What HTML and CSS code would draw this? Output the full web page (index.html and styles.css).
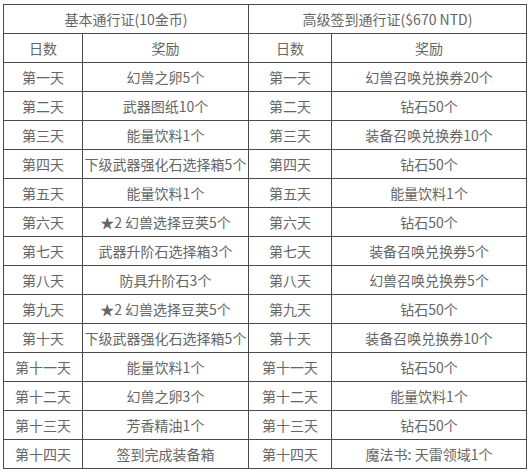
FILE: index.html
```html
<!DOCTYPE html>
<html lang="zh">
<head>
<meta charset="utf-8">
<link rel="stylesheet" href="styles.css">
</head>
<body>
<table class="pass">
<colgroup><col class="c1"><col class="c2"><col class="c3"><col class="c4"></colgroup>
<tr><td colspan="2">基本通行证(10金币)</td><td colspan="2">高级签到通行证($670 NTD)</td></tr>
<tr><td>日数</td><td>奖励</td><td>日数</td><td>奖励</td></tr>
<tr><td>第一天</td><td>幻兽之卵5个</td><td>第一天</td><td>幻兽召唤兑换券20个</td></tr>
<tr><td>第二天</td><td>武器图纸10个</td><td>第二天</td><td>钻石50个</td></tr>
<tr><td>第三天</td><td>能量饮料1个</td><td>第三天</td><td>装备召唤兑换券10个</td></tr>
<tr><td>第四天</td><td>下级武器强化石选择箱5个</td><td>第四天</td><td>钻石50个</td></tr>
<tr><td>第五天</td><td>能量饮料1个</td><td>第五天</td><td>能量饮料1个</td></tr>
<tr><td>第六天</td><td>★2 幻兽选择豆荚5个</td><td>第六天</td><td>钻石50个</td></tr>
<tr><td>第七天</td><td>武器升阶石选择箱3个</td><td>第七天</td><td>装备召唤兑换券5个</td></tr>
<tr><td>第八天</td><td>防具升阶石3个</td><td>第八天</td><td>幻兽召唤兑换券5个</td></tr>
<tr><td>第九天</td><td>★2 幻兽选择豆荚5个</td><td>第九天</td><td>钻石50个</td></tr>
<tr><td>第十天</td><td>下级武器强化石选择箱5个</td><td>第十天</td><td>装备召唤兑换券10个</td></tr>
<tr><td>第十一天</td><td>能量饮料1个</td><td>第十一天</td><td>钻石50个</td></tr>
<tr><td>第十二天</td><td>幻兽之卵3个</td><td>第十二天</td><td>能量饮料1个</td></tr>
<tr><td>第十三天</td><td>芳香精油1个</td><td>第十三天</td><td>钻石50个</td></tr>
<tr><td>第十四天</td><td>签到完成装备箱</td><td>第十四天</td><td>魔法书: 天雷领域1个</td></tr>
</table>
</body>
</html>
```
FILE: styles.css
```css
html, body {
  margin: 0;
  padding: 0;
  background: #ffffff;
}
body {
  padding: 4px 0 0 3px;
  font-family: "Noto Sans CJK SC", "Noto Sans", sans-serif;
  font-size: 14px;
  color: #666666;
}
.pass {
  border-collapse: collapse;
  table-layout: fixed;
  width: 523px;
}
.c1 { width: 79px; }
.c2 { width: 166px; }
.c3 { width: 83px; }
.c4 { width: 195px; }
.pass td {
  border: 1px solid #4a4a50;
  height: 29px;
  padding: 0;
  text-align: center;
  vertical-align: middle;
  white-space: nowrap;
  line-height: 20px;
  box-sizing: border-box;
}
```
